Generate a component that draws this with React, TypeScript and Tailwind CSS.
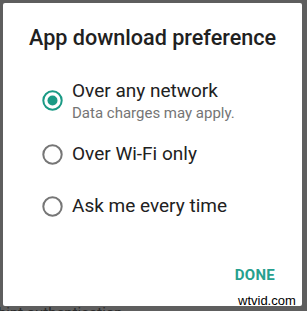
import React from "react";

const options = [
  { label: "Over any network", hint: "Data charges may apply.", checked: true },
  { label: "Over Wi-Fi only", checked: false },
  { label: "Ask me every time", checked: false },
];

function Radio({ checked }: { checked: boolean }) {
  return (
    <svg width="21" height="21" viewBox="0 0 21 21" className="shrink-0">
      <circle cx="10.5" cy="10.5" r="9.2" fill="none" stroke={checked ? "#1a9a85" : "#767676"} strokeWidth="2" />
      {checked && <circle cx="10.5" cy="10.5" r="5" fill="#1a9a85" />}
    </svg>
  );
}

export default function App() {
  return (
    <div
      className="relative w-[307px] h-[311px] overflow-hidden bg-[#5e5e5e] pt-[3px] pl-[3px]"
      style={{ fontFamily: "Roboto, 'Noto Sans', sans-serif" }}
    >
      <div className="w-[299px] h-[303px] bg-white rounded-[2px] flex flex-col">
        <h1 className="pt-[22px] pl-[26px] text-[21.6px] leading-[26px] font-medium text-[#212121]">
          App download preference
        </h1>

        <div className="mt-[28px] flex flex-col">
          {options.map((o) => (
            <div key={o.label} className={`flex items-start pl-[39px] ${o.hint ? "h-[63px]" : "h-[52px]"}`}>
              <div className={o.hint ? "mt-[11px]" : "mt-[2px]"}>
                <Radio checked={o.checked} />
              </div>
              <div className="pl-[9px]">
                <div className="text-[19px] leading-[24px] text-[#212121]">{o.label}</div>
                {o.hint && <div className="text-[15px] leading-[20px] text-[#757575]">{o.hint}</div>}
              </div>
            </div>
          ))}
        </div>

        <div className="mt-auto mb-[21px] flex justify-end pr-[27px]">
          <span className="text-[15px] leading-[20px] font-bold tracking-[0.3px] text-[#26a08e]">DONE</span>
        </div>
      </div>

      <div className="absolute left-[-2px] top-[305px] text-[15px] leading-[16px] text-[#2a2a2a] whitespace-nowrap">
        hint authentication
      </div>
      <div className="absolute left-[238px] top-[294px] text-[13px] leading-[14px] text-black" style={{ fontFamily: "'Liberation Sans', Arial, sans-serif" }}>
        wtvid.com
      </div>
    </div>
  );
}
